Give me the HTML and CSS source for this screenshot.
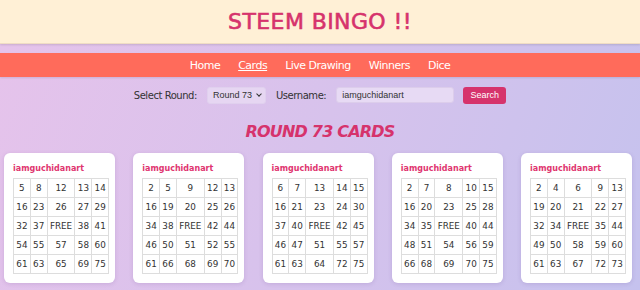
FILE: index.html
```html
<!DOCTYPE html>
<html lang="en">
<head>
<meta charset="utf-8">
<title>Steem Bingo - Cards</title>
<link rel="stylesheet" href="styles.css">
</head>
<body>
<header class="site-header">
  <h1 class="site-title">STEEM BINGO !!</h1>
</header>
<nav class="main-nav">
  <a href="#" class="nav-link">Home</a>
  <a href="#" class="nav-link active">Cards</a>
  <a href="#" class="nav-link">Live Drawing</a>
  <a href="#" class="nav-link">Winners</a>
  <a href="#" class="nav-link">Dice</a>
</nav>
<form class="controls">
  <label class="ctl-label">Select Round:</label>
  <span class="select-wrap"><select class="round-select"><option>Round 73</option></select></span>
  <label class="ctl-label">Username:</label>
  <input class="user-input" type="text" value="iamguchidanart">
  <button class="search-btn" type="button">Search</button>
</form>
<h2 class="round-title">ROUND 73 CARDS</h2>
<main class="cards" id="cards"></main>
<script src="app.js"></script>
</body>
</html>
```
FILE: styles.css
```css
* { box-sizing: border-box; }
html, body { margin: 0; padding: 0; }
body {
  width: 640px;
  height: 290px;
  overflow: hidden;
  font-family: "DejaVu Sans", sans-serif;
  background: linear-gradient(110deg, #e6c3eb 0%, #d7c2ec 50%, #c5c2ee 100%);
  color: #333;
}
.site-header {
  height: 44px;
  background: #fff0d6;
  display: flex;
  align-items: center;
  justify-content: center;
  box-shadow: 0 1px 2px rgba(0,0,0,0.12);
  border-bottom: 1px solid #efdcc4;
}
.site-title {
  margin: 0;
  font-size: 22px;
  font-weight: normal;
  color: #d6336c;
  letter-spacing: 0.4px;
  -webkit-text-stroke: 0.6px #d6336c;
}
.main-nav {
  margin-top: 9px;
  height: 24px;
  background: #ff6b5b;
  display: flex;
  justify-content: center;
  align-items: center;
  gap: 18px;
  box-shadow: 0 1px 2px rgba(0,0,0,0.1);
}
.nav-link {
  color: #fff;
  text-decoration: none;
  font-size: 11px;
  letter-spacing: -0.5px;
}
.nav-link.active { text-decoration: underline; }
.controls {
  margin: 9px 0 0;
  height: 18px;
  display: flex;
  justify-content: center;
  align-items: center;
  font-size: 10px;
  letter-spacing: -0.45px;
  color: #333;
}
.ctl-label { margin-right: 10px; }
.select-wrap {
  position: relative;
  display: inline-flex;
  margin-right: 10px;
}
.select-wrap::after {
  content: "";
  position: absolute;
  right: 5px;
  top: 5px;
  width: 3px;
  height: 3px;
  border-right: 1.3px solid #333;
  border-bottom: 1.3px solid #333;
  transform: rotate(45deg);
  pointer-events: none;
}
.round-select {
  -webkit-appearance: none;
  appearance: none;
  font-family: "Liberation Sans", Arial, sans-serif;
  font-size: 9px;
  letter-spacing: 0;
  height: 17px;
  width: 59px;
  border: 1px solid #e0d0ee;
  border-radius: 3px;
  background: #e6d6f2;
  color: #333;
  padding: 0 10px 0 5px;
}
.user-input {
  font-family: "Liberation Sans", Arial, sans-serif;
  font-size: 9px;
  letter-spacing: 0;
  height: 16px;
  width: 118px;
  margin-right: 9px;
  border: 1px solid #dccdeb;
  border-radius: 3px;
  background: #e7daf4;
  color: #333;
  padding: 0 5px;
}
.search-btn {
  font-family: "Liberation Sans", Arial, sans-serif;
  font-size: 9px;
  letter-spacing: 0;
  height: 17px;
  width: 43px;
  padding: 0;
  border: none;
  border-radius: 3px;
  background: #d6336c;
  color: #fff;
}
.round-title {
  margin: 0;
  padding-top: 18px;
  height: 49px;
  text-align: center;
  font-size: 16px;
  letter-spacing: -0.8px;
  font-style: italic;
  font-weight: bold;
  color: #d6336c;
}
.cards {
  display: grid;
  grid-template-columns: repeat(5, 111px);
  column-gap: 18.25px;
  padding-left: 4px;
}
.card {
  background: #fff;
  border-radius: 6px;
  padding: 10px 7px 9px 9px;
  box-shadow: 0 1px 4px rgba(80,40,120,0.15);
}
.card-name {
  font-size: 8px;
  font-weight: bold;
  color: #e0356f;
  line-height: 12px;
  margin-bottom: 3px;
}
.bingo {
  border-collapse: collapse;
  border: 1px solid #ddd;
}
.bingo td {
  border: 1px solid #ddd;
  font-size: 8.8px;
  line-height: 12px;
  padding: 3px 2.3px;
  text-align: center;
  color: #333;
  white-space: nowrap;
}
```
FILE: app.js
```js
var cards = [
  [[5,8,12,13,14],[16,23,26,27,29],[32,37,"FREE",38,41],[54,55,57,58,60],[61,63,65,69,75]],
  [[2,5,9,12,13],[16,19,20,25,26],[34,38,"FREE",42,44],[46,50,51,52,55],[61,66,68,69,70]],
  [[6,7,13,14,15],[16,21,23,24,30],[37,40,"FREE",42,45],[46,47,51,55,57],[61,63,64,72,75]],
  [[2,7,8,10,15],[16,20,23,25,28],[34,35,"FREE",40,44],[48,51,54,56,59],[66,68,69,70,75]],
  [[2,4,6,9,13],[19,20,21,22,27],[32,34,"FREE",35,44],[49,50,58,59,60],[61,63,67,72,73]]
];
var wrap = document.getElementById("cards");
cards.forEach(function (rows) {
  var card = document.createElement("div");
  card.className = "card";
  var name = document.createElement("div");
  name.className = "card-name";
  name.textContent = "iamguchidanart";
  card.appendChild(name);
  var table = document.createElement("table");
  table.className = "bingo";
  rows.forEach(function (r) {
    var tr = document.createElement("tr");
    r.forEach(function (v) {
      var td = document.createElement("td");
      td.textContent = v;
      tr.appendChild(td);
    });
    table.appendChild(tr);
  });
  card.appendChild(table);
  wrap.appendChild(card);
});
```
